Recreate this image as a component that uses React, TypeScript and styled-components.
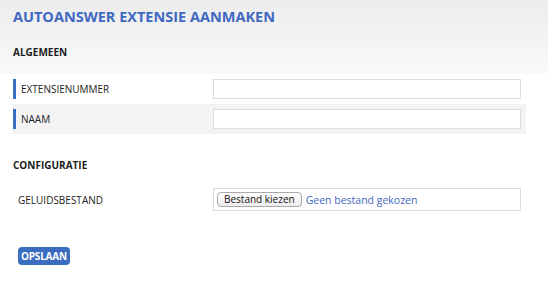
import React from "react";
import styled, { createGlobalStyle } from "styled-components";

const GlobalStyle = createGlobalStyle`
  html, body {
    margin: 0;
    padding: 0;
    background: #fff;
  }
  body {
    font-family: "Open Sans", "Liberation Sans", sans-serif;
    color: #222;
  }
`;

const Page = styled.div`
  width: 548px;
  height: 282px;
  box-sizing: border-box;
  padding: 6px 22px 0 13px;
  background: linear-gradient(#ececec, #fafafa) no-repeat;
  background-size: 100% 74px;
`;

const Title = styled.h1`
  margin: 0;
  font-size: 14.5px;
  line-height: 22px;
  font-weight: 700;
  color: #3f68c2;
`;

const SectionTitle = styled.h2<{ gap: number }>`
  margin: ${(p) => p.gap}px 0 0;
  font-size: 10px;
  line-height: 14px;
  font-weight: 700;
  color: #1c1c1c;
`;

const Rows = styled.div<{ gap: number }>`
  margin-top: ${(p) => p.gap}px;
  display: flex;
  flex-direction: column;
`;

const Row = styled.div<{ shaded?: boolean; tall?: boolean }>`
  display: flex;
  align-items: center;
  height: ${(p) => (p.tall ? 33 : 30)}px;
  background: ${(p) => (p.shaded ? "#f3f3f3" : "transparent")};
`;

const Label = styled.div<{ marked?: boolean }>`
  width: 200px;
  flex: none;
  box-sizing: border-box;
  height: 20px;
  display: flex;
  align-items: center;
  padding-left: 5px;
  border-left: ${(p) => (p.marked ? "3px solid #3a6cbf" : "none")};
  font-size: 10px;
  text-transform: uppercase;
  color: #222;
`;

const TextInput = styled.input`
  width: 308px;
  height: 20px;
  box-sizing: border-box;
  border: 1px solid #dcdcdc;
  background: #fff;
  padding: 0 4px;
  margin: 0;
  outline: none;
`;

const FileBox = styled.div`
  width: 308px;
  height: 23px;
  box-sizing: border-box;
  border: 1px solid #dcdcdc;
  display: flex;
  align-items: center;
  gap: 4px;
  padding: 0 3px;
`;

const FileButton = styled.button`
  height: 15px;
  padding: 0 6px;
  border: 1px solid #aaa;
  border-radius: 4px;
  background: linear-gradient(#fff, #ededed);
  font-family: "Open Sans", "Liberation Sans", sans-serif;
  font-size: 10px;
  line-height: 13px;
  color: #111;
`;

const FileStatus = styled.span`
  font-size: 10.5px;
  color: #3f68c2;
`;

const SaveButton = styled.button`
  margin: 31px 0 0 5px;
  height: 18px;
  padding: 0 3px;
  border: none;
  border-radius: 4px;
  background: #3a6cbf;
  color: #fff;
  font-family: "Open Sans", "Liberation Sans", sans-serif;
  font-size: 10px;
  font-weight: 700;
  letter-spacing: -0.2px;
  cursor: pointer;
`;

export default function App() {
  return (
    <Page>
      <GlobalStyle />
      <Title>AUTOANSWER EXTENSIE AANMAKEN</Title>
      <SectionTitle gap={17}>ALGEMEEN</SectionTitle>
      <Rows gap={15}>
        <Row>
          <Label marked>Extensienummer</Label>
          <TextInput type="text" />
        </Row>
        <Row shaded>
          <Label marked>Naam</Label>
          <TextInput type="text" />
        </Row>
      </Rows>
      <SectionTitle gap={24}>CONFIGURATIE</SectionTitle>
      <Rows gap={11}>
        <Row tall>
          <Label>Geluidsbestand</Label>
          <FileBox>
            <FileButton type="button">Bestand kiezen</FileButton>
            <FileStatus>Geen bestand gekozen</FileStatus>
          </FileBox>
        </Row>
      </Rows>
      <SaveButton type="button">OPSLAAN</SaveButton>
    </Page>
  );
}
